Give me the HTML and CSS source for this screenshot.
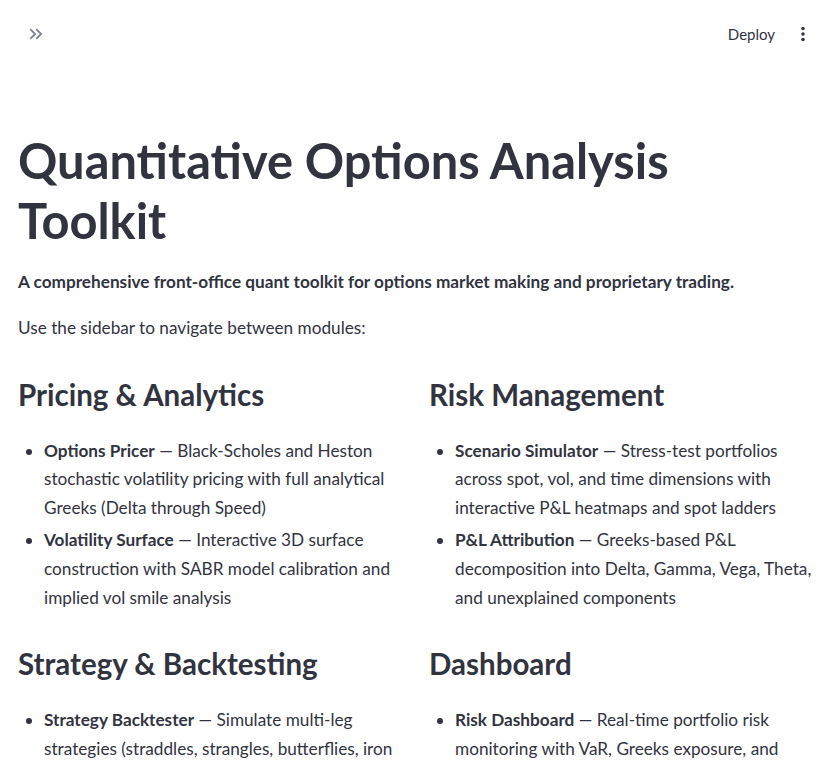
FILE: index.html
```html
<!DOCTYPE html>
<html lang="en">
<head>
    <meta charset="UTF-8" />
    <title>Quant Options Toolkit</title>
    <link rel="stylesheet" href="styles.css">
</head>
<body>
    <header class="topbar">
        <button class="icon-btn expand" aria-label="Open sidebar">
            <svg viewBox="0 0 24 24" width="22" height="22">
                <path d="M6.41 6 5 7.41 9.58 12 5 16.59 6.41 18l6-6z"/>
                <path d="M13 6l-1.41 1.41L16.17 12l-4.58 4.59L13 18l6-6z"/>
            </svg>
        </button>
        <div class="toolbar">
            <span class="deploy">Deploy</span>
            <button class="icon-btn menu" aria-label="Main menu">
                <svg viewBox="0 0 24 24" width="22" height="22">
                    <circle cx="12" cy="6" r="1.9"/>
                    <circle cx="12" cy="12" r="1.9"/>
                    <circle cx="12" cy="18" r="1.9"/>
                </svg>
            </button>
        </div>
    </header>

    <main class="content">
        <h1>Quantitative Options Analysis Toolkit</h1>
        <p class="lead">A comprehensive front-office quant toolkit for options market making and proprietary trading.</p>
        <p>Use the sidebar to navigate between modules:</p>

        <div class="modules">
            <section>
                <h3>Pricing &amp; Analytics</h3>
                <ul>
                    <li><strong>Options Pricer</strong> — Black-Scholes and Heston stochastic volatility pricing with full analytical Greeks (Delta through Speed)</li>
                    <li><strong>Volatility Surface</strong> — Interactive 3D surface construction with SABR model calibration and implied vol smile analysis</li>
                </ul>
            </section>
            <section>
                <h3>Risk Management</h3>
                <ul>
                    <li><strong>Scenario Simulator</strong> — Stress-test portfolios across spot, vol, and time dimensions with interactive P&amp;L heatmaps and spot ladders</li>
                    <li><strong>P&amp;L Attribution</strong> — Greeks-based P&amp;L decomposition into Delta, Gamma, Vega, Theta, and unexplained components</li>
                </ul>
            </section>
            <section>
                <h3>Strategy &amp; Backtesting</h3>
                <ul>
                    <li><strong>Strategy Backtester</strong> — Simulate multi-leg strategies (straddles, strangles, butterflies, iron condors) with historical data</li>
                </ul>
            </section>
            <section>
                <h3>Dashboard</h3>
                <ul>
                    <li><strong>Risk Dashboard</strong> — Real-time portfolio risk monitoring with VaR, Greeks exposure, and concentration limits</li>
                </ul>
            </section>
        </div>
    </main>
</body>
</html>
```

FILE: styles.css
```css
body {
    font-family: Lato, 'Noto Sans', sans-serif;
    font-size: 17.2px;
    line-height: 28.8px;
    color: #31333f;
    background: #fff;
    margin: 0;
}

.topbar {
    height: 68px;
    display: flex;
    justify-content: space-between;
    align-items: center;
    padding: 0 26px 0 25px;
}

.icon-btn {
    background: none;
    border: none;
    padding: 0;
    display: flex;
    cursor: pointer;
}

.expand svg {
    fill: #808495;
}

.menu svg {
    fill: #31333f;
}

.toolbar {
    display: flex;
    align-items: center;
    gap: 17px;
}

.deploy {
    font-size: 15px;
}

.content {
    padding: 0 18px;
}

h1 {
    font-size: 48.8px;
    font-weight: 700;
    line-height: 60px;
    margin: 62px 0 18px;
}

p {
    margin: 0 0 17px;
}

.lead {
    font-weight: 700;
}

.modules {
    display: grid;
    grid-template-columns: 1fr 1fr;
    column-gap: 18px;
    margin-top: 33px;
}

h3 {
    font-size: 29.5px;
    font-weight: 700;
    line-height: 38px;
    margin: 0 0 23px;
}

ul {
    margin: 0 0 32px;
    padding-left: 26px;
}

li {
    margin-bottom: 3.5px;
}
```
